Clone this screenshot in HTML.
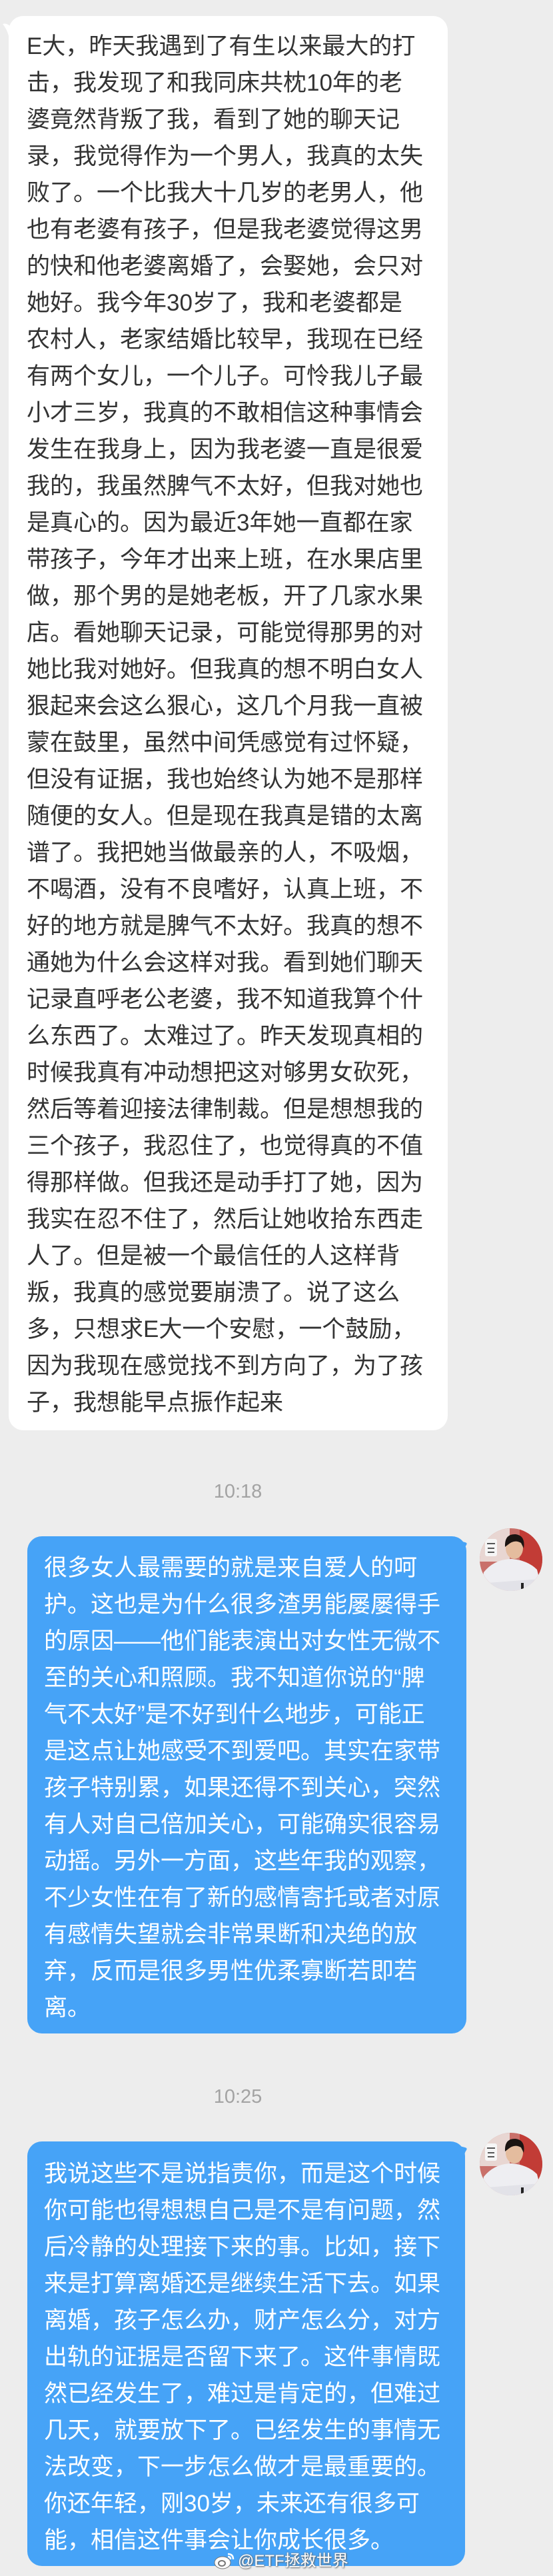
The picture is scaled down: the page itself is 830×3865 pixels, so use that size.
<!DOCTYPE html>
<html><head><meta charset="utf-8">
<style>
html,body{margin:0;padding:0}
body{width:830px;height:3865px;background:#ededed;position:relative;overflow:hidden;font-family:"Liberation Sans","Noto Sans CJK SC",sans-serif}
.b{position:absolute;border-radius:22px;font-size:35px;line-height:55px;white-space:nowrap;box-sizing:border-box}
.w{background:#fff;color:#333}
.bl{background:#46a3f7;color:#fff}
.t{position:absolute;left:0;width:714px;text-align:center;font-size:29px;color:#a3a3a3;line-height:40px}
.av{position:absolute;width:94px;height:94px}
.wm{position:absolute;left:320px;top:3826px;font-size:24px;color:#fff;text-shadow:0 0 2px #777,1px 1px 2px #666;white-space:nowrap;line-height:34px}
</style></head><body>

<svg style="position:absolute;left:0;top:30px" width="30" height="50"><path d="M4 6 Q10 4 16 10 L16 40 Q14 18 4 6Z" fill="#fff"/></svg>
<div class="b w" style="left:13px;top:24px;width:659px;height:2122px;padding:18px 0 0 27px">E大，昨天我遇到了有生以来最大的打<br>击，我发现了和我同床共枕10年的老<br>婆竟然背叛了我，看到了她的聊天记<br>录，我觉得作为一个男人，我真的太失<br>败了。一个比我大十几岁的老男人，他<br>也有老婆有孩子，但是我老婆觉得这男<br>的快和他老婆离婚了，会娶她，会只对<br>她好。我今年30岁了，我和老婆都是<br>农村人，老家结婚比较早，我现在已经<br>有两个女儿，一个儿子。可怜我儿子最<br>小才三岁，我真的不敢相信这种事情会<br>发生在我身上，因为我老婆一直是很爱<br>我的，我虽然脾气不太好，但我对她也<br>是真心的。因为最近3年她一直都在家<br>带孩子，今年才出来上班，在水果店里<br>做，那个男的是她老板，开了几家水果<br>店。看她聊天记录，可能觉得那男的对<br>她比我对她好。但我真的想不明白女人<br>狠起来会这么狠心，这几个月我一直被<br>蒙在鼓里，虽然中间凭感觉有过怀疑，<br>但没有证据，我也始终认为她不是那样<br>随便的女人。但是现在我真是错的太离<br>谱了。我把她当做最亲的人，不吸烟，<br>不喝酒，没有不良嗜好，认真上班，不<br>好的地方就是脾气不太好。我真的想不<br>通她为什么会这样对我。看到她们聊天<br>记录直呼老公老婆，我不知道我算个什<br>么东西了。太难过了。昨天发现真相的<br>时候我真有冲动想把这对够男女砍死，<br>然后等着迎接法律制裁。但是想想我的<br>三个孩子，我忍住了，也觉得真的不值<br>得那样做。但我还是动手打了她，因为<br>我实在忍不住了，然后让她收拾东西走<br>人了。但是被一个最信任的人这样背<br>叛，我真的感觉要崩溃了。说了这么<br>多，只想求E大一个安慰，一个鼓励，<br>因为我现在感觉找不到方向了，为了孩<br>子，我想能早点振作起来</div>

<div class="t" style="top:2218px">10:18</div>

<svg class="av" style="left:720px;top:2293px" viewBox="0 0 94 94">
<defs><clipPath id="c1"><circle cx="47" cy="47" r="47"/></clipPath></defs>
<g clip-path="url(#c1)">
<rect width="94" height="94" fill="#c9706a"/>
<rect x="0" y="0" width="45" height="50" fill="#e8d6d2"/>
<rect x="60" y="0" width="34" height="70" fill="#c23c36"/>
<path d="M2 94 L6 66 Q22 46 48 46 Q72 48 86 62 L94 94Z" fill="#eeeef2"/>
<path d="M10 82 L92 76 L94 94 L8 94Z" fill="#e2e2e8"/>
<ellipse cx="52" cy="30" rx="13" ry="16" fill="#e4bc9e"/>
<path d="M38 28 Q37 8 54 9 Q69 11 66 30 L62 22 Q52 16 42 25Z" fill="#1b1412"/>
<rect x="8" y="16" width="18" height="26" rx="3" fill="#f6f6f6"/>
<path d="M11 23 L23 23 M12 30 L22 30 M12 36 L22 36" stroke="#222" stroke-width="1.5"/>
<rect x="62" y="82" width="4" height="9" fill="#222"/>
</g></svg>
<div class="b bl" style="left:41px;top:2305px;width:659px;height:746px;padding:20px 0 0 25px">很多女人最需要的就是来自爱人的呵<br>护。这也是为什么很多渣男能屡屡得手<br>的原因——他们能表演出对女性无微不<br>至的关心和照顾。我不知道你说的“脾<br>气不太好”是不好到什么地步，可能正<br>是这点让她感受不到爱吧。其实在家带<br>孩子特别累，如果还得不到关心，突然<br>有人对自己倍加关心，可能确实很容易<br>动摇。另外一方面，这些年我的观察，<br>不少女性在有了新的感情寄托或者对原<br>有感情失望就会非常果断和决绝的放<br>弃，反而是很多男性优柔寡断若即若<br>离。</div>
<svg style="position:absolute;left:690px;top:2312px" width="22" height="40"><path d="M0 0 L8 2 Q12 3 10 6 Q4 14 6 40 L0 40Z" fill="#46a3f7"/></svg>

<div class="t" style="top:3126px">10:25</div>

<svg class="av" style="left:720px;top:3200px" viewBox="0 0 94 94">
<defs><clipPath id="c2"><circle cx="47" cy="47" r="47"/></clipPath></defs>
<g clip-path="url(#c2)">
<rect width="94" height="94" fill="#c9706a"/>
<rect x="0" y="0" width="45" height="50" fill="#e8d6d2"/>
<rect x="60" y="0" width="34" height="70" fill="#c23c36"/>
<path d="M2 94 L6 66 Q22 46 48 46 Q72 48 86 62 L94 94Z" fill="#eeeef2"/>
<path d="M10 82 L92 76 L94 94 L8 94Z" fill="#e2e2e8"/>
<ellipse cx="52" cy="30" rx="13" ry="16" fill="#e4bc9e"/>
<path d="M38 28 Q37 8 54 9 Q69 11 66 30 L62 22 Q52 16 42 25Z" fill="#1b1412"/>
<rect x="8" y="16" width="18" height="26" rx="3" fill="#f6f6f6"/>
<path d="M11 23 L23 23 M12 30 L22 30 M12 36 L22 36" stroke="#222" stroke-width="1.5"/>
<rect x="62" y="82" width="4" height="9" fill="#222"/>
</g></svg>
<div class="b bl" style="left:41px;top:3213px;width:657px;height:637px;padding:21px 0 0 25px">我说这些不是说指责你，而是这个时候<br>你可能也得想想自己是不是有问题，然<br>后冷静的处理接下来的事。比如，接下<br>来是打算离婚还是继续生活下去。如果<br>离婚，孩子怎么办，财产怎么分，对方<br>出轨的证据是否留下来了。这件事情既<br>然已经发生了，难过是肯定的，但难过<br>几天，就要放下了。已经发生的事情无<br>法改变，下一步怎么做才是最重要的。<br>你还年轻，刚30岁，未来还有很多可<br>能，相信这件事会让你成长很多。</div>
<svg style="position:absolute;left:690px;top:3220px" width="22" height="40"><path d="M0 0 L8 2 Q12 3 10 6 Q4 14 6 40 L0 40Z" fill="#46a3f7"/></svg>

<svg style="position:absolute;left:321px;top:3828px" width="32" height="28" viewBox="0 0 32 28">
<ellipse cx="13" cy="17" rx="12" ry="9" fill="#fff" stroke="#777" stroke-width="1"/>
<ellipse cx="12" cy="18" rx="5" ry="4" fill="none" stroke="#777" stroke-width="2"/>
<path d="M21 4 Q29 4 29 12 M21 8 Q25 8 25 12" stroke="#fff" stroke-width="2.5" fill="none"/>
</svg>
<div class="wm" style="left:357px">@ETF拯救世界</div>
</body></html>
